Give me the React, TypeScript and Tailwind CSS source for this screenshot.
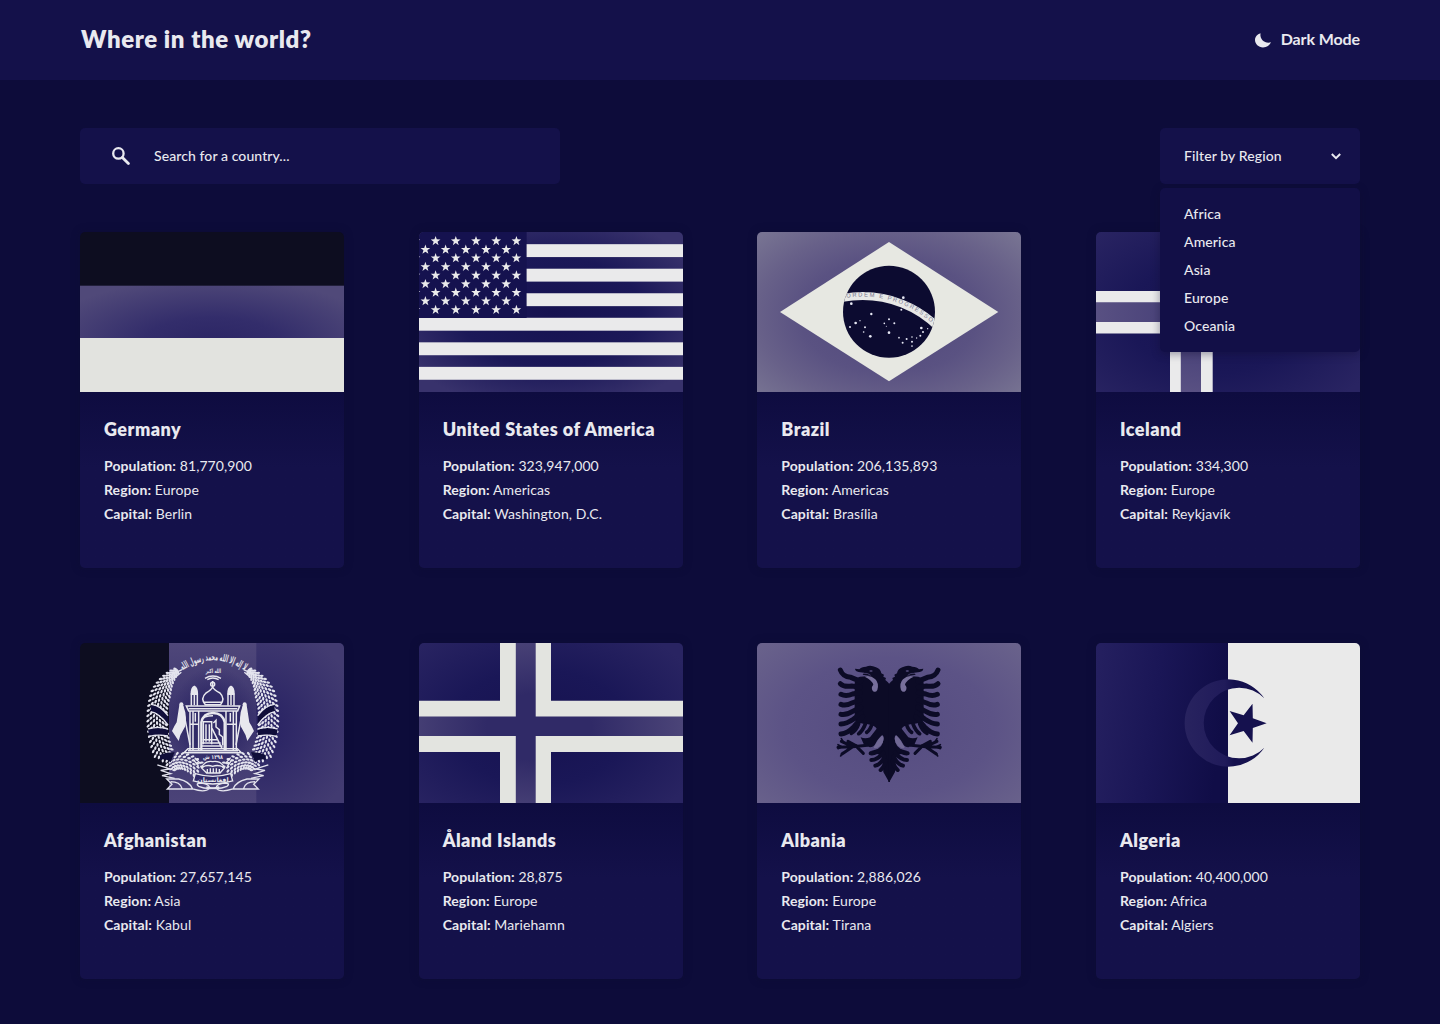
import React from "react";

function starPoints(cx: number, cy: number, r: number, rot = -90): string {
  const pts: string[] = [];
  for (let i = 0; i < 10; i++) {
    const a = ((rot + i * 36) * Math.PI) / 180;
    const q = i % 2 === 0 ? r : r * 0.4;
    pts.push(`${(cx + q * Math.cos(a)).toFixed(2)},${(cy + q * Math.sin(a)).toFixed(2)}`);
  }
  return pts.join(" ");
}

function Flag({ children }: { children: React.ReactNode }) {
  return (
    <svg viewBox="0 0 264 160" className="block h-40 w-[264px] shrink-0 rounded-t-[5px]">
      {children}
    </svg>
  );
}

function Germany() {
  return (
    <Flag>
      <defs>
        <radialGradient id="de" gradientUnits="userSpaceOnUse" cx="0" cy="0" r="1" gradientTransform="translate(132 112) scale(175 66)">
          <stop offset="0" stopColor="#2b2564" />
          <stop offset="0.4" stopColor="#332d6b" />
          <stop offset="1" stopColor="#504979" />
        </radialGradient>
      </defs>
      <rect width="264" height="54" fill="#0d0d20" />
      <rect y="53.7" width="264" height="53" fill="url(#de)" />
      <rect y="106" width="264" height="54" fill="#e2e3df" />
    </Flag>
  );
}

function Usa() {
  const stars: React.ReactNode[] = [];
  for (let row = 0; row < 9; row++) {
    for (let col = 0; col < 6; col++) {
      const x = (row % 2 === 0 ? -3.6 : 6.4) + col * 20.2;
      if (x < 104) stars.push(<polygon key={`${row}-${col}`} points={starPoints(x, 9 + row * 8.6, 5.1)} />);
    }
  }
  return (
    <Flag>
      <defs>
        <radialGradient id="us" gradientUnits="userSpaceOnUse" cx="0" cy="0" r="1" gradientTransform="translate(132 80) scale(165 100)">
          <stop offset="0" stopColor="#161250" />
          <stop offset="0.55" stopColor="#1b1858" />
          <stop offset="1" stopColor="#38326c" />
        </radialGradient>
      </defs>
      <rect width="264" height="160" fill="url(#us)" />
      <g fill="#eaeaeb">
        {[1, 3, 5, 7, 9, 11].map((i) => (
          <rect key={i} y={i * 12.27 - 0.1} width="264" height="12.9" />
        ))}
      </g>
      <rect width="107.6" height="86" fill="#15124f" />
      <g fill="#eaeaeb">{stars}</g>
    </Flag>
  );
}

const brazilStars: [number, number, number][] = [
  [304, 236, 4], [364, 267, 3.5], [317, 294, 4], [330, 287, 2], [300, 306, 3], [345, 307, 3], [341, 321, 2.5],
  [361, 334, 4], [417, 283, 3], [403, 295, 2.5], [433, 295, 3], [409, 304, 1.5], [417, 323, 4], [447, 338, 2.5],
  [458, 353, 3], [470, 342, 3], [486, 336, 2.5], [486, 350, 3], [486, 363, 2.5], [500, 339, 2], [511, 332, 3],
  [519, 321, 3], [514, 309, 4], [533, 311, 2], [460, 218, 4], [454, 254, 3],
];

function Brazil() {
  return (
    <Flag>
      <defs>
        <radialGradient id="br" gradientUnits="userSpaceOnUse" cx="0" cy="0" r="1" gradientTransform="translate(132 84) scale(178 116)">
          <stop offset="0" stopColor="#4f467a" />
          <stop offset="0.5" stopColor="#5a5282" />
          <stop offset="0.75" stopColor="#686189" />
          <stop offset="1" stopColor="#777392" />
        </radialGradient>
        <clipPath id="br-disc">
          <circle cx="132" cy="79.8" r="46" />
        </clipPath>
        <path id="br-band" d="M87.5 66A105.200 105.200 0 0 1 180 95.800" />
      </defs>
      <rect width="264" height="160" fill="url(#br)" />
      <polygon points="23,80 132,10 241.3,80 132,149.3" fill="#e7e8e2" />
      <circle cx="132" cy="79.8" r="46" fill="#0c0b30" />
      <g transform="translate(-7 -7) scale(.3333)" fill="#e7e8f4">
        {brazilStars.map(([x, y, r]) => (
          <circle key={`${x}-${y}`} cx={x} cy={y} r={r} />
        ))}
      </g>
      <g clipPath="url(#br-disc)">
        <circle cx="105.7" cy="171" r="107" fill="none" stroke="#e7e8e6" strokeWidth="7.8" />
        <text fill="#77778e" className="font-['Liberation_Sans'] text-[5.8px]">
          <textPath href="#br-band" startOffset="2" textLength="91">
            ORDEM E PROGRESSO
          </textPath>
        </text>
      </g>
    </Flag>
  );
}

function NordicGradients({ id, bar }: { id: string; bar: [string, string] }) {
  return (
    <defs>
      <radialGradient id={id} gradientUnits="userSpaceOnUse" cx="0" cy="0" r="1" gradientTransform="translate(120 84) scale(175 115)">
        <stop offset="0" stopColor="#161250" />
        <stop offset="0.5" stopColor="#1a1757" />
        <stop offset="1" stopColor="#292462" />
      </radialGradient>
      <radialGradient id={`${id}-bar`} gradientUnits="userSpaceOnUse" cx="0" cy="0" r="1" gradientTransform="translate(120 84) scale(150 96)">
        <stop offset="0.35" stopColor={bar[0]} />
        <stop offset="1" stopColor={bar[1]} />
      </radialGradient>
    </defs>
  );
}

function Iceland() {
  return (
    <Flag>
      <NordicGradients id="is" bar={["#4a437a", "#5f5686"]} />
      <rect width="264" height="160" fill="url(#is)" />
      <path d="M0 59H264V101.6H0ZM74 0H116.7V160H74Z" fill="#eaeaeb" />
      <path d="M0 70.3H264V90H0ZM84.8 0H105V160H84.8Z" fill="url(#is-bar)" />
    </Flag>
  );
}

function Aland() {
  return (
    <Flag>
      <NordicGradients id="ax" bar={["#302a67", "#4d4679"]} />
      <rect width="264" height="160" fill="url(#ax)" />
      <path d="M0 57.7H264V109H0ZM81 0H132V160H81Z" fill="#e3e4e0" />
      <path d="M0 73.4H264V93H0ZM96.8 0H116.7V160H96.8Z" fill="url(#ax-bar)" />
    </Flag>
  );
}

type Pt = [number, number];

function cubic(p: [Pt, Pt, Pt, Pt], t: number): { x: number; y: number; a: number } {
  const u = 1 - t;
  const f = (k: 0 | 1) => u * u * u * p[0][k] + 3 * u * u * t * p[1][k] + 3 * u * t * t * p[2][k] + t * t * t * p[3][k];
  const d = (k: 0 | 1) => 3 * u * u * (p[1][k] - p[0][k]) + 6 * u * t * (p[2][k] - p[1][k]) + 3 * t * t * (p[3][k] - p[2][k]);
  return { x: f(0), y: f(1), a: (Math.atan2(d(1), d(0)) * 180) / Math.PI };
}

function grains(curve: [Pt, Pt, Pt, Pt], steps: number, lanes: number[], taper: boolean, key: string): React.ReactNode[] {
  const out: React.ReactNode[] = [];
  for (let i = 0; i < steps; i++) {
    lanes.forEach((lane, j) => {
      const t = (i + (j % 2) * 0.5) / steps;
      const p = cubic(curve, t);
      const w = taper ? Math.min(1, 0.3 + t * 2.2) : 1;
      const n = ((p.a + 90) * Math.PI) / 180;
      const x = p.x + Math.cos(n) * lane * w;
      const y = p.y + Math.sin(n) * lane * w;
      out.push(
        <ellipse key={`${key}${i}-${j}`} cx={x.toFixed(1)} cy={y.toFixed(1)} rx="5.8" ry="3.4" transform={`rotate(${(p.a + 180 + lane * 1.9).toFixed(1)} ${x.toFixed(1)} ${y.toFixed(1)})`} />,
      );
    });
  }
  return out;
}

function WreathHalf() {
  return (
    <g>
      <g fill="#e4e4ee">
        {grains([[110, 78], [44, 124], [34, 250], [76, 336]], 21, [-27, -18, -9, 0, 9, 18, 27], true, "a")}
        {grains([[84, 362], [110, 336], [150, 346], [182, 380]], 9, [-22, -13, -4, 5, 14, 22], false, "b")}
      </g>
      <path d="M34 180Q60 182 84 214L84 238Q60 204 32 198ZM24 254Q54 244 84 254V272Q54 266 28 272ZM60 330Q80 320 104 322L92 352Q76 338 60 346Z" fill="#100e3a" />
      <g fill="none" stroke="#e4e4ee" strokeWidth="4">
        <path d="M34 178Q60 180 84 212M32 200Q60 206 84 240M24 252Q54 242 84 252M28 274Q54 267 84 273" />
        <path d="M52 360L90 372L62 376L92 386L66 392L104 400M126 74L96 88M124 82L104 98" />
        <path d="M80 402H116Q150 410 158 432H82L96 418ZM92 410Q120 410 126 430M158 432Q196 444 208 430Q210 418 186 414Q164 414 176 424Q204 436 238 426" />
      </g>
    </g>
  );
}

function Afghanistan() {
  return (
    <Flag>
      <defs>
        <linearGradient id="af-mid" x1="0" y1="0" x2="0" y2="1">
          <stop offset="0" stopColor="#4f477a" />
          <stop offset="0.45" stopColor="#3c356e" />
          <stop offset="1" stopColor="#4b4378" />
        </linearGradient>
        <radialGradient id="af-end" gradientUnits="userSpaceOnUse" cx="0" cy="0" r="1" gradientTransform="translate(176 84) scale(105 105)">
          <stop offset="0.2" stopColor="#2b2565" />
          <stop offset="1" stopColor="#423b71" />
        </radialGradient>
        <radialGradient id="af-core">
          <stop offset="0.5" stopColor="#2a2463" stopOpacity="0.7" />
          <stop offset="1" stopColor="#2a2463" stopOpacity="0" />
        </radialGradient>
      </defs>
      <rect width="90" height="160" fill="#0d0d20" />
      <rect x="89" width="88" height="160" fill="url(#af-mid)" />
      <rect x="176.3" width="87.7" height="160" fill="url(#af-end)" />
      <g transform="translate(60 2) scale(.3333)">
        <ellipse cx="222" cy="235" rx="134" ry="170" fill="url(#af-core)" />
        <WreathHalf />
        <g transform="translate(437 0) scale(-1 1)">
          <WreathHalf />
        </g>
        <path id="af-arc" d="M122 80Q218 12 320 80" fill="none" />
        <text fill="#e8e8ee" className="font-['DejaVu_Sans'] text-[30px] font-bold">
          <textPath href="#af-arc" startOffset="50%" textAnchor="middle" textLength="200" lengthAdjust="spacingAndGlyphs">
            لا إله إلا الله محمد رسول الله
          </textPath>
        </text>
        <text x="220" y="84" textAnchor="middle" fill="#e8e8ee" className="font-['DejaVu_Sans'] text-[18px] font-bold" textLength="46" lengthAdjust="spacingAndGlyphs">
          الله اكبر
        </text>
        <path d="M195 100Q218 86 243 100M202 104Q218 94 236 104" fill="none" stroke="#e8e8ee" strokeWidth="4" />
        <g fill="none" stroke="#e8e8ee" strokeWidth="4.5">
          <path d="M196 179Q180 160 198 144Q214 135 218 126Q222 135 240 144Q256 160 242 179ZM218 126V108M192 172H246" />
          <circle cx="218" cy="118" r="6" />
          <path d="M154 182V148H172V182M264 182V148H282V182M163 150V180M273 150V180" />
          <path d="M154 146Q154 128 163 124Q172 128 172 146ZM264 146Q264 128 273 124Q282 128 282 146Z" fill="#e8e8ee" />
          <path d="M139 183H299L293 198H146ZM146 191H292" />
          <path d="M150 198V315M159 198V315M176 198V315M258 198V315M280 198V315M289 198V315" />
          <path d="M184 315V232Q190 204 219 204Q248 204 254 232V315" strokeWidth="7" />
          <path d="M184 226Q190 212 219 212M190 298V230H215V298M198 238V290M208 238V290M150 238H176M260 238H289M166 204V230M271 204V230" />
          <path d="M220 234L228 226V246L238 254V268L248 276V300M216 250L246 310M188 284H232M186 294H242M186 303H248" />
          <path d="M144 311H292L304 323H132ZM144 317H294" />
          <path d="M126 176L150 300M312 176L288 300" />
        </g>
        <g fill="#e8e8ee">
          <path d="M118 180L128 176L136 202Q142 240 130 254Q120 268 116 288L96 258Q102 244 110 232ZM320 180L310 176L302 202Q296 240 308 254Q318 268 322 288L342 258Q336 244 328 232Z" />
          <circle cx="124" cy="178" r="6" />
          <circle cx="314" cy="178" r="6" />
        </g>
        <text x="219" y="342" textAnchor="middle" fill="#e8e8ee" className="font-['DejaVu_Sans'] text-[18px] font-bold" textLength="60" lengthAdjust="spacingAndGlyphs">
          ١٢٩٨ ش
        </text>
        <g fill="none" stroke="#e8e8ee" strokeWidth="4">
          <path d="M184 368Q196 346 218 350Q242 346 254 368L240 384H200ZM188 366Q202 358 218 364Q234 358 250 366M202 372V382M211 370V382M220 370V382M229 370V382M238 372V382" />
          <path d="M166 386Q218 402 272 386L278 408Q218 426 160 408Z" fill="#2f2966" />
          <path d="M160 344L176 364M164 338L182 356M276 344L262 364M272 338L256 356" />
        </g>
        <text x="219" y="410" textAnchor="middle" fill="#e8e8ee" className="font-['DejaVu_Sans'] text-[19px] font-bold" textLength="94" lengthAdjust="spacingAndGlyphs">
          افغانستان
        </text>
      </g>
    </Flag>
  );
}

function EagleHalf() {
  return (
    <g>
      <path
        d="M210 104L203 96L196 90L198 84L190 80L192 74L184 70Q182 56 168 52Q152 44 138 50Q124 50 118 58L105 56Q106 64 116 66L132 68L128 74L150 78L120 80Q104 84 104 100V210Q118 222 140 222Q164 226 170 236L150 262Q136 268 122 262L132 284L150 292Q160 292 166 282Q176 262 188 256Q194 262 188 278Q184 290 176 296L150 304L188 318L190 366L207 396L210 396Z"
        fill="#0c0b26"
      />
      <g fill="none" stroke="#0c0b26" strokeLinecap="round" strokeWidth="15">
        <path d="M61 60Q68 80 92 82L122 94" />
        <path d="M61 101Q72 112 96 108L120 112" />
        <path d="M63 133Q78 140 98 132L120 128" />
        <path d="M63 163Q78 169 98 158L120 150" />
        <path d="M63 193Q78 196 98 184L122 172" />
        <path d="M63 222Q80 222 100 208L124 190" />
        <path d="M63 252Q82 250 102 230L128 200" />
      </g>
      <g fill="none" stroke="#0c0b26" strokeLinecap="round">
        <path d="M94 250Q108 244 116 222M116 251Q128 243 136 222M140 247Q150 241 156 222" strokeWidth="11" />
        <path d="M142 286L98 290M98 290L64 274M98 290L54 292M98 290L66 312M110 288L84 274M112 292L130 310" strokeWidth="9" />
        <path d="M54 284L66 290L54 296M62 318L68 308M64 266L72 278" strokeWidth="5" />
        <path d="M152 310Q168 312 184 296M154 330Q172 330 190 308M166 347Q182 344 194 320M182 360Q192 352 198 332" strokeWidth="12" />
      </g>
      <path d="M134 80Q150 74 166 88Q178 100 172 120Q166 130 158 122Q152 112 160 104Q156 90 134 80Z" fill="#776f9b" />
      <path d="M186 256Q194 262 188 278Q182 290 170 295Q160 296 162 290Q174 268 186 256Z" fill="#716995" />
      <ellipse cx="153" cy="63" rx="5" ry="2" fill="#5d5588" />
      <path d="M130 70Q144 68 152 76" fill="none" stroke="#5d5588" strokeWidth="2" />
    </g>
  );
}

function Albania() {
  return (
    <Flag>
      <defs>
        <radialGradient id="al" gradientUnits="userSpaceOnUse" cx="0" cy="0" r="1" gradientTransform="translate(132 84) scale(190 125)">
          <stop offset="0" stopColor="#554c80" />
          <stop offset="0.55" stopColor="#5c5386" />
          <stop offset="1" stopColor="#6b648c" />
        </radialGradient>
      </defs>
      <rect width="264" height="160" fill="url(#al)" />
      <g transform="translate(63 7) scale(.3333)">
        <EagleHalf />
        <g transform="translate(415 0) scale(-1 1)">
          <EagleHalf />
        </g>
      </g>
    </Flag>
  );
}

function Algeria() {
  const crescent = "M538 190A131 131 0 1 0 538 338A106 106 0 1 1 538 190Z";
  return (
    <Flag>
      <defs>
        <linearGradient id="dz" x1="0" y1="0" x2="1" y2="0.15">
          <stop offset="0" stopColor="#252060" />
          <stop offset="0.5" stopColor="#1a1656" />
          <stop offset="1" stopColor="#100d47" />
        </linearGradient>
        <linearGradient id="dz-moon" gradientUnits="userSpaceOnUse" x1="299" y1="0" x2="540" y2="0">
          <stop offset="0" stopColor="#28235f" />
          <stop offset="0.5" stopColor="#201b5a" />
          <stop offset="0.62" stopColor="#15114e" />
          <stop offset="1" stopColor="#15114e" />
        </linearGradient>
      </defs>
      <rect width="132.5" height="160" fill="url(#dz)" />
      <rect x="132" width="132" height="160" fill="#eaeaea" />
      <g transform="translate(-11 -8) scale(.3333)">
        <path d={crescent} fill="url(#dz-moon)" />
        <polygon points={starPoints(483.6, 264.5, 61.5, 0)} fill="#15114e" />
      </g>
    </Flag>
  );
}

interface Country {
  name: string;
  population: string;
  region: string;
  capital: string;
  flag: () => React.ReactElement;
}

const countries: Country[] = [
  { name: "Germany", population: "81,770,900", region: "Europe", capital: "Berlin", flag: Germany },
  { name: "United States of America", population: "323,947,000", region: "Americas", capital: "Washington, D.C.", flag: Usa },
  { name: "Brazil", population: "206,135,893", region: "Americas", capital: "Brasília", flag: Brazil },
  { name: "Iceland", population: "334,300", region: "Europe", capital: "Reykjavík", flag: Iceland },
  { name: "Afghanistan", population: "27,657,145", region: "Asia", capital: "Kabul", flag: Afghanistan },
  { name: "Åland Islands", population: "28,875", region: "Europe", capital: "Mariehamn", flag: Aland },
  { name: "Albania", population: "2,886,026", region: "Europe", capital: "Tirana", flag: Albania },
  { name: "Algeria", population: "40,400,000", region: "Africa", capital: "Algiers", flag: Algeria },
];

const regions = ["Africa", "America", "Asia", "Europe", "Oceania"];

function Fact({ label, value }: { label: string; value: string }) {
  return (
    <p className="text-sm leading-6 tracking-[0.09px] whitespace-nowrap">
      <span className="font-bold">{label}:</span> {value}
    </p>
  );
}

function CountryCard({ country }: { country: Country }) {
  const FlagArt = country.flag;
  return (
    <article className="flex h-[336px] w-[264px] flex-col rounded-[5px] bg-linear-to-b from-[#0e0c40] from-48% to-[#14114a] to-70% shadow-[0_0_7px_2px_rgba(14,13,50,0.3)]">
      <FlagArt />
      <div className="px-6 pt-6">
        <h2 className="mb-3 text-lg leading-[26px] font-extrabold tracking-[0.47px] whitespace-nowrap">{country.name}</h2>
        <Fact label="Population" value={country.population} />
        <Fact label="Region" value={country.region} />
        <Fact label="Capital" value={country.capital} />
      </div>
    </article>
  );
}

export default function App() {
  return (
    <div className="h-[1024px] w-[1440px] overflow-hidden bg-[#0d0c3a] font-['Lato',sans-serif] text-[#e9e9ef]">
      <header className="flex h-20 items-center justify-between bg-[#14114a] px-20">
        <h1 className="pb-0.5 pl-px text-2xl font-extrabold tracking-[0.58px]">Where in the world?</h1>
        <button className="flex items-center gap-2.5 text-base font-bold tracking-[-0.1px]">
          <svg viewBox="0 0 16 15" className="h-[15px] w-4" fill="currentColor">
            <path d="M5.500 .3C2.300 1.200 0 3.800 0 7.100C0 11.200 3.500 14.400 8 14.400C11.800 14.400 14.800 12.400 16 9.300C11 11 4.500 7.500 5.500 .3Z" />
          </svg>
          <span className="pb-0.5">Dark Mode</span>
        </button>
      </header>
      <main className="px-20 pt-12">
        <div className="flex justify-between">
          <label className="flex h-14 w-[480px] items-center rounded-[5px] bg-[#14114a] pl-8">
            <svg viewBox="0 0 18 18" className="size-[18px]" fill="none" stroke="currentColor">
              <circle cx="6.4" cy="6.4" r="5.2" strokeWidth="2.3" />
              <path d="M10.400 10.400L16.400 16.400" strokeWidth="2.800" strokeLinecap="round" />
            </svg>
            <span className="ml-6 text-sm font-medium tracking-[0.09px]">Search for a country...</span>
          </label>
          <div className="relative w-50">
            <button className="flex h-14 w-full items-center justify-between rounded-[5px] bg-[#14114a] pr-[19px] pl-6 text-sm font-medium tracking-[0.12px]">
              Filter by Region
              <svg viewBox="0 0 10 7" className="h-[7px] w-2.5" fill="none" stroke="currentColor" strokeWidth="2">
                <path d="M.8 1L5 5.200L9.200 1" />
              </svg>
            </button>
            <ul className="absolute top-[60px] left-0 h-41 w-full rounded-[5px] bg-[#120f47] px-6 pt-3 text-sm leading-7 font-medium tracking-[0.12px] shadow-[0_2px_9px_rgba(14,13,45,0.4)]">
              {regions.map((region) => (
                <li key={region}>{region}</li>
              ))}
            </ul>
          </div>
        </div>
        <div className="mt-12 grid grid-cols-[repeat(4,264px)] justify-between gap-y-[75px]">
          {countries.map((country) => (
            <CountryCard key={country.name} country={country} />
          ))}
        </div>
      </main>
    </div>
  );
}
